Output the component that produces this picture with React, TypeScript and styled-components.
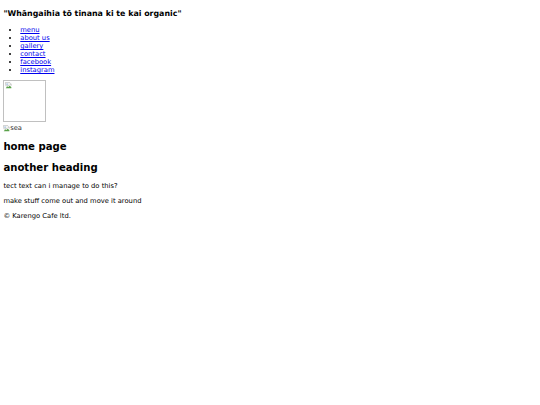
import React from 'react'
import styled, { createGlobalStyle } from 'styled-components'

// the reference is a plain unstyled page shot at 1280px wide and shrunk to 540px,
// so every default size below is multiplied by this
const S = 0.421875
const px = (n: number, nudge = 0) => `${(n * S + nudge).toFixed(3)}px`

const GlobalStyle = createGlobalStyle`
  html, body {
    background: #ffffff;
  }
  body {
    margin: ${px(8)};
    font-family: "DejaVu Sans", Verdana, sans-serif;
    font-size: ${px(16)};
    line-height: normal;
    color: #000000;
  }
`

const Tagline = styled.h3`
  font-size: ${px(18.72)};
  font-weight: bold;
  margin: ${px(18.72, -2)} 0 ${px(18.72)};
`

const NavList = styled.ul`
  list-style: disc;
  margin: ${px(16)} 0 ${px(16, -1)};
  padding-left: ${px(40)};
`

const NavItem = styled.li`
  line-height: normal;
`

const NavLink = styled.a`
  color: #0000ee;
  text-decoration: underline;
`

const ImageFrame = styled.span`
  display: inline-block;
  box-sizing: border-box;
  width: ${px(100)};
  height: ${px(100)};
  border: 1px solid #c0c0c0;
  padding: 1px;
  vertical-align: baseline;
`

const AltImage = styled.span`
  display: inline-flex;
  align-items: flex-end;
  color: #333333;
`

const Icon = styled.svg`
  display: block;
  flex: none;
`

const Heading = styled.h2<{ $lead?: boolean }>`
  font-size: ${px(24)};
  font-weight: bold;
  margin: ${(p) => (p.$lead ? px(19.92, -1) : px(19.92))} 0 ${px(19.92, 1)};
`

const Paragraph = styled.p`
  margin: ${px(16)} 0;
`

const BrokenIcon = () => (
  <Icon width={px(16)} height={px(16)} viewBox="0 0 16 16">
    <path d="M1 1h10l4 4v3l-3 -2-3 3-2-2-3 3-2 -1z" fill="#f2f2f2" stroke="#9a9a9a" strokeWidth="1" />
    <path d="M2 14l4-4 2 2 3-3 4 3v3H2z" fill="#5aa14a" />
    <circle cx="5" cy="5" r="1.6" fill="#6fa8dc" />
  </Icon>
)

const links = ['menu', 'about us', 'gallery', 'contact', 'facebook', 'instagram']

export default function App() {
  return (
    <>
      <GlobalStyle />
      <Tagline>"Whāngaihia tō tinana ki te kai organic"</Tagline>
      <NavList>
        {links.map((l) => (
          <NavItem key={l}>
            <NavLink href="#">{l}</NavLink>
          </NavItem>
        ))}
      </NavList>
      <ImageFrame>
        <BrokenIcon />
      </ImageFrame>
      <br />
      <AltImage>
        <BrokenIcon />
        sea
      </AltImage>
      <Heading $lead>home page</Heading>
      <Heading>another heading</Heading>
      <Paragraph>tect text can i manage to do this?</Paragraph>
      <Paragraph>make stuff come out and move it around</Paragraph>
      <Paragraph>© Karengo Cafe ltd.</Paragraph>
    </>
  )
}
